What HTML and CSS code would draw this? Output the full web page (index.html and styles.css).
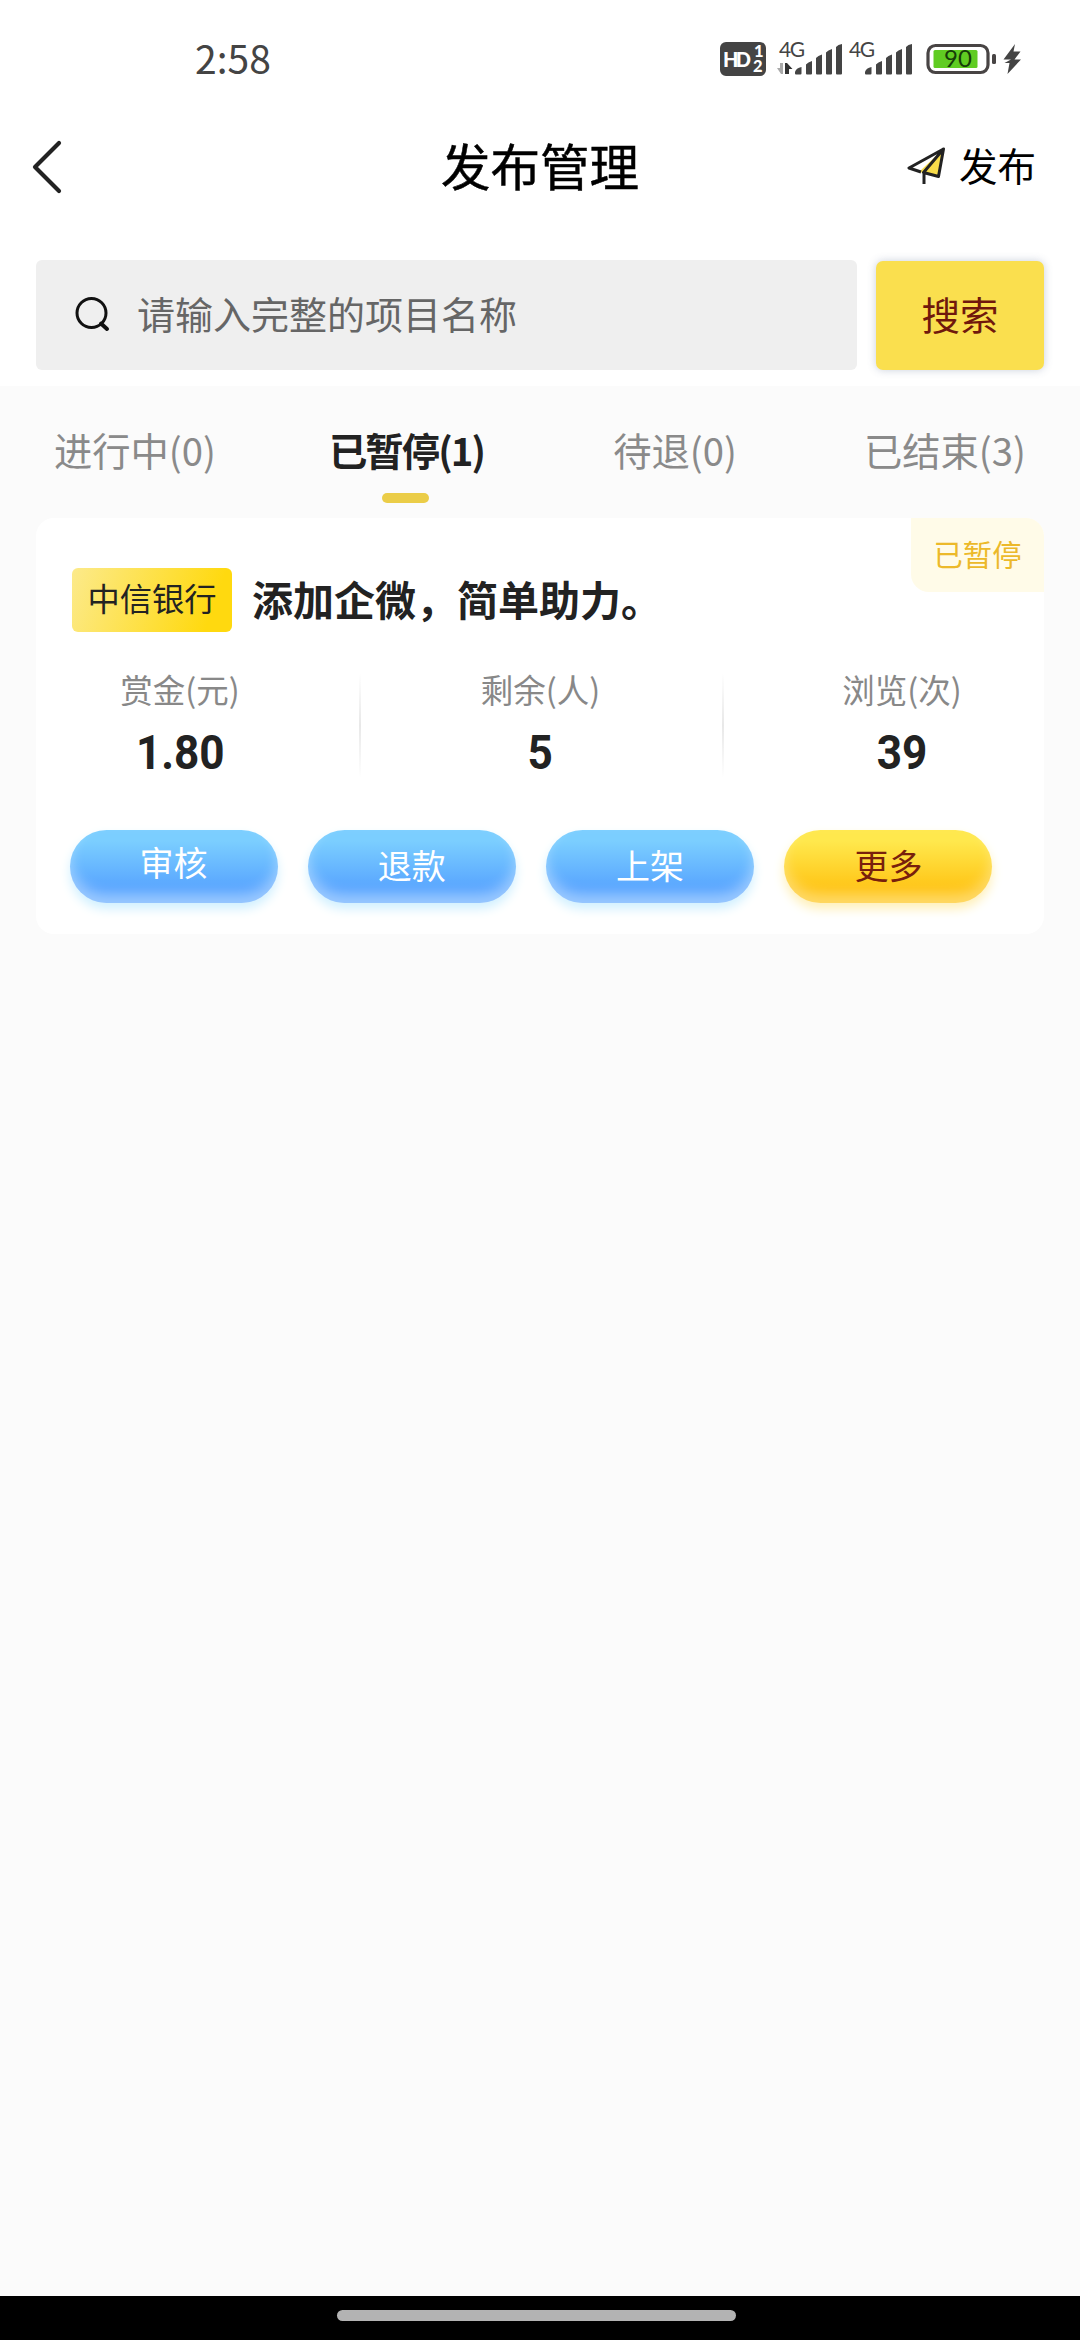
FILE: index.html
```html
<!DOCTYPE html>
<html lang="zh-CN">
<head>
<meta charset="utf-8">
<title>发布管理</title>
<link rel="stylesheet" href="styles.css">
</head>
<body>
<div class="screen">
  <header class="top">
    <div class="status">
      <span class="clock">2:58</span>
      <svg class="status-icons" width="310" height="60" viewBox="0 -20 310 60">
        <rect x="2" y="2" width="46" height="34" rx="6" fill="#444"/>
        <g fill="#fff" font-family="Lato, sans-serif" font-weight="900">
          <text x="5" y="26.500" font-size="20" textLength="28">HD</text>
          <text x="36" y="17" font-size="16.500">1</text>
          <text x="35" y="32" font-size="16.500">2</text>
        </g>
        <g fill="#444" font-family="Lato, sans-serif" font-size="21">
          <text x="61" y="17" textLength="26">4G</text>
          <text x="131" y="17" textLength="26">4G</text>
        </g>
        <path d="M65 23v11h-2l-4-6h3v-5z" fill="#aaa"/>
        <path d="M67 34v-11h2l5.500 6h-3.500v5z" fill="#333"/>
        <g id="bars" fill="#444">
          <path d="M77 32q1-4 6.500-5v6.500q0 1-1 1h-4.500q-1 0-1-1zM88 24.500q2-2.500 6-3.500v12.500q0 1-1 1h-4q-1 0-1-1zM98 18q2-2.500 6-3.500v19q0 1-1 1h-4q-1 0-1-1zM108 12.500q2-2.500 6-3.500v24.500q0 1-1 1h-4q-1 0-1-1zM118 7q2-2.500 6-3v29.500q0 1-1 1h-4q-1 0-1-1z"/>
        </g>
        <use href="#bars" x="70"/>
        <rect x="210" y="5.500" width="60" height="27" rx="7.500" fill="#fff" stroke="#484444" stroke-width="3.200"/>
        <rect x="215.500" y="10" width="44" height="18" rx="1.500" fill="#60cc22"/>
        <text x="226" y="27" font-family="Lato, sans-serif" font-size="24" textLength="28" fill="#163c08">90</text>
        <rect x="274" y="14" width="4" height="10" rx="1.500" fill="#484444"/>
        <path d="M297 4L285.500 19.500H293l-6.500 3.500h5l-2 11L303 19.500h-6.500l6-8h-7z" fill="#444"/>
      </svg>
    </div>
    <nav class="navbar">
      <svg class="back" width="40" height="56" viewBox="0 0 40 56"><path d="M31 4L7 28l24 24" fill="none" stroke="#222" stroke-width="4.200" stroke-linecap="round" stroke-linejoin="round"/></svg>
      <h1>发布管理</h1>
      <div class="publish">
        <svg width="40" height="40" viewBox="0 0 40 40">
          <path d="M38.500 2L14 25l20 4z" fill="#f8dc4a"/>
          <path d="M38.500 2L4 21l12 4M38.500 2L18.500 25.500l15 4zM19 25v12" fill="none" stroke="#222" stroke-width="3" stroke-linejoin="round"/>
        </svg>
        <span>发布</span>
      </div>
    </nav>
    <div class="search">
      <div class="field">
        <svg width="36" height="38" viewBox="0 0 36 38"><circle cx="17.500" cy="17" r="14.500" fill="none" stroke="#111" stroke-width="3"/><path d="M27 27.500l6 5.500" stroke="#111" stroke-width="4" stroke-linecap="round"/></svg>
        <span>请输入完整的项目名称</span>
      </div>
      <button class="go">搜索</button>
    </div>
  </header>
  <div class="tabs">
    <span class="tab">进行中(0)</span>
    <span class="tab active"><span>已暂停(1)</span></span>
    <span class="tab">待退(0)</span>
    <span class="tab">已结束(3)</span>
  </div>
  <section class="card">
    <span class="badge">已暂停</span>
    <div class="heading"><span class="tag">中信银行</span><h2>添加企微，简单助力。</h2></div>
    <div class="stats">
      <div class="stat"><span>赏金(元)</span><b>1.80</b></div>
      <div class="stat"><span>剩余(人)</span><b>5</b></div>
      <div class="stat"><span>浏览(次)</span><b>39</b></div>
    </div>
    <div class="actions">
      <button class="pill raised">审核</button>
      <button class="pill">退款</button>
      <button class="pill">上架</button>
      <button class="pill more">更多</button>
    </div>
  </section>
  <footer class="home"><i></i></footer>
</div>
</body>
</html>
```
FILE: styles.css
```css
* { box-sizing: border-box; margin: 0; padding: 0; }
body { font-family: "Noto Sans CJK SC", sans-serif; }
button { border: 0; font: inherit; }
svg { display: block; flex: none; }
.screen { width: 1080px; height: 2340px; background: #fbfbfb; display: flex; flex-direction: column; }
.top { background: #fff; height: 386px; }
.status { height: 120px; padding: 20px 52px 0 195px; display: flex; justify-content: space-between; color: #444; }
.clock { font-size: 39px; line-height: 38px; margin-top: 18px; }
.navbar { height: 94px; display: grid; grid-template-columns: 1fr auto 1fr; align-items: center; padding: 0 44px 0 28px; }
.navbar h1 { font-size: 49.5px; line-height: 60px; font-weight: 400; -webkit-text-stroke: .5px #000; color: #000; margin: -5px -8px 0 8px; }
.publish { justify-self: end; display: flex; align-items: center; gap: 14px; font-size: 38.5px; line-height: 50px; color: #000; }
.publish span { margin-top: -6px; }
.search { height: 156px; padding: 46px 36px 0; display: flex; gap: 19px; }
.field { width: 821px; height: 110px; background: #efefef; border-radius: 6px; display: flex; align-items: center; padding-left: 38px; gap: 27px; font-size: 38px; color: #666; }
.field span { margin-top: -6px; }
.go { flex: 1; height: 109px; margin-top: 1px; background: #fadf4e; border-radius: 7px; color: #70180c; font-size: 38.5px; padding-bottom: 6px; box-shadow: 0 0 9px rgba(80, 100, 140, .3); }
.tabs { height: 132px; display: grid; grid-template-columns: repeat(4, 1fr); color: #8a8a8a; font-size: 38.3px; line-height: 128px; text-align: center; }
.tab.active { color: #222; font-weight: 700; letter-spacing: -1.9px; display: flex; flex-direction: column; align-items: center; }
.tab.active span { padding-left: 3px; }
.tab.active::after { content: ""; width: 47px; height: 10px; border-radius: 5px; background: #ebcd48; margin-top: -21px; }
.card { position: relative; margin: 0 36px; height: 416px; background: #fff; border-radius: 18px; padding: 50px 33px 0; }
.badge { position: absolute; top: 0; right: 0; width: 133px; height: 74px; border-radius: 0 18px; background: #fffbe8; color: #ecb92a; font-size: 29.3px; line-height: 71px; text-align: center; }
.heading { display: flex; align-items: center; gap: 20px; padding-left: 3px; }
.tag { width: 160px; height: 64px; border-radius: 6px; background: linear-gradient(110deg, #fcea8b, #ffd90f 85%); color: #222; font-size: 32.3px; line-height: 58px; text-align: center; }
.heading h2 { font-size: 41px; line-height: 58px; margin-top: -4px; color: #222; }
.stats { display: grid; grid-template-columns: 323px 363px 322px; width: 1008px; height: 104px; margin: 41px -33px 0; }
.stat { display: flex; flex-direction: column; align-items: center; color: #888; font-size: 32.5px; line-height: 32px; }
.stat:first-child { padding-right: 35px; }
.stat:last-child { padding-left: 38px; }
.stat b { color: #222; font-family: Roboto, sans-serif; font-size: 49px; line-height: 50px; margin-top: 23px; transform: scaleX(.9); }
.stat + .stat { background: linear-gradient(#fff, #e8e8e8 50%, #fff) left / 2px 100% no-repeat; }
.actions { display: flex; gap: 30.3px; margin-top: 53px; padding-left: .5px; }
.pill { width: 208px; height: 73px; border-radius: 37px; background: linear-gradient(#7bceff 15%, #58a5ff 80%); color: #fff; font-size: 34px; padding-bottom: 5px; box-shadow: 0 6px 11px #d0f0ff, inset 0 -9px 13px rgba(255, 255, 255, .4); }
.pill.raised { padding-bottom: 11px; }
.pill.more { background: linear-gradient(#ffe84d 15%, #ffc516 80%); color: #78200c; box-shadow: 0 6px 11px #fff0b8, inset 0 -9px 13px rgba(255, 255, 255, .35); }
.home { margin-top: auto; height: 44px; background: #000; padding-top: 14px; }
.home i { display: block; width: 399px; height: 11px; margin-left: 337px; border-radius: 6px; background: #b3b3b3; }
```
